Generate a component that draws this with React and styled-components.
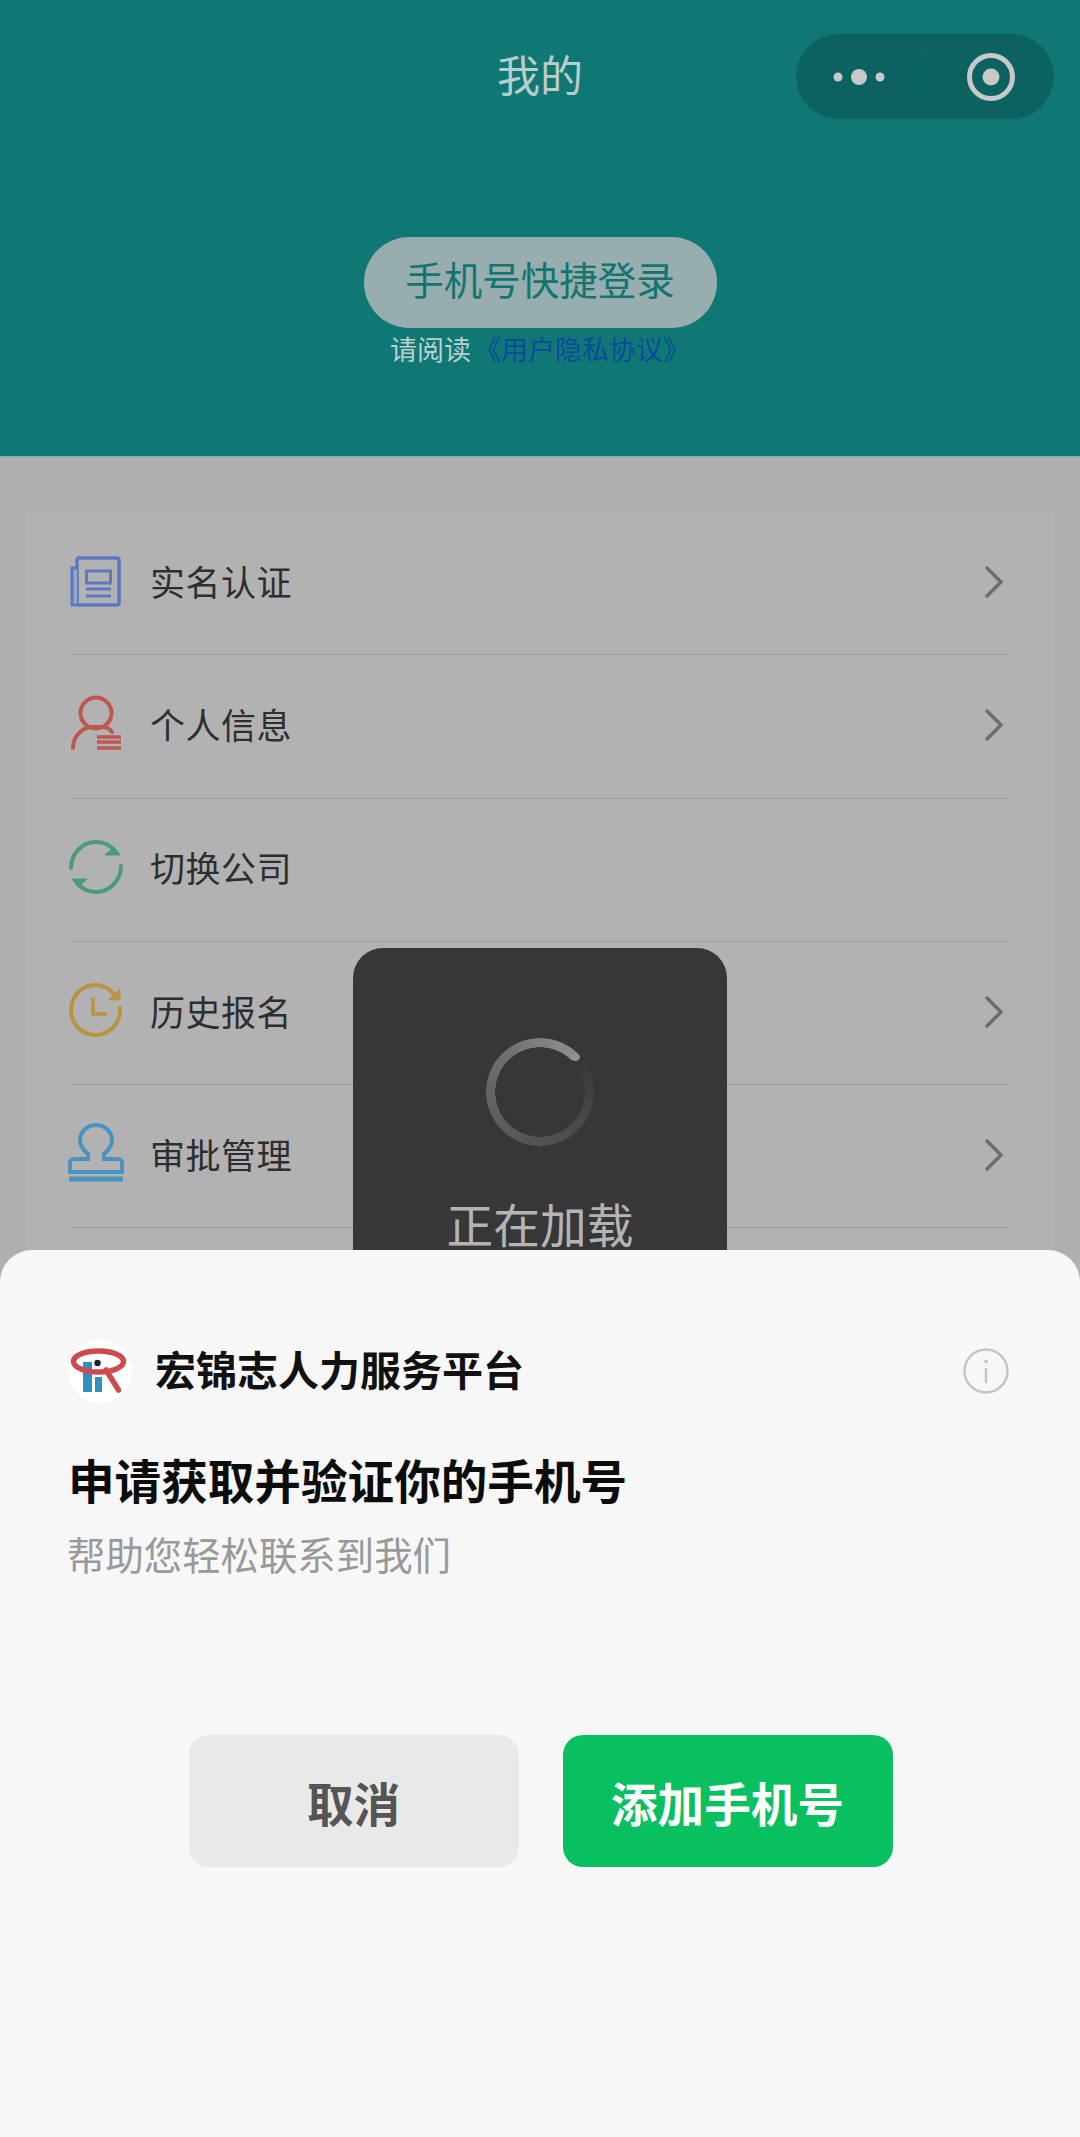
import React from "react";
import styled, { createGlobalStyle } from "styled-components";

const Global = createGlobalStyle`
  html, body { margin: 0; padding: 0; background: #b0b0b0; }
  body { font-family: "Noto Sans CJK SC", "Noto Sans", sans-serif; }
  * { box-sizing: border-box; }
`;

const Screen = styled.div`
  position: relative;
  width: 1080px;
  height: 2137px;
  overflow: hidden;
  background: #afafaf;
`;

const Header = styled.header`
  height: 458px;
  background: #0f7874;
  border-bottom: 2px solid #86b0ac;
  display: flex;
  flex-direction: column;
  align-items: center;
`;

const NavBar = styled.div`
  position: relative;
  align-self: stretch;
  height: 153px;
  padding-top: 32px;
  display: flex;
  justify-content: center;
`;

const NavTitle = styled.h1`
  margin: 0;
  height: 84px;
  line-height: 82px;
  font-size: 43px;
  font-weight: 400;
  color: #b9cdcb;
`;

const Capsule = styled.div`
  position: absolute;
  top: 34px;
  right: 26px;
  width: 258px;
  height: 85px;
  border-radius: 43px;
  background: #0b6261;
  display: flex;
  align-items: center;
`;

const CapsuleCell = styled.div`
  flex: 1;
  height: 100%;
  padding-left: ${(p) => p.$inset || 0}px;
  display: flex;
  align-items: center;
  justify-content: center;
`;

const CapsuleRule = styled.div`
  width: 1px;
  height: 52px;
  background: #0f6f6d;
`;

const LoginButton = styled.div`
  margin-top: 84px;
  width: 353px;
  height: 91px;
  border-radius: 46px;
  background: #97adae;
  color: #127570;
  font-size: 38.5px;
  line-height: 82px;
  text-align: center;
`;

const Agreement = styled.p`
  margin: 1px 0 0;
  height: 40px;
  line-height: 40px;
  font-size: 27px;
  color: #bccfce;
`;

const AgreementLink = styled.span`
  margin-left: 3px;
  color: #0d4a9c;
`;

const MenuCard = styled.section`
  margin: 54px 27px 0;
  padding: 0 43px;
  height: 900px;
  background: #b2b2b2;
`;

const MenuRow = styled.div`
  height: 143.3px;
  display: flex;
  align-items: center;
  padding-bottom: 6px;
  border-bottom: 1px solid #a0a0a0;
  font-size: 35px;
  color: #2e2e2e;
`;

const MenuIcon = styled.div`
  width: 56px;
  height: 60px;
  margin-left: -2px;
  margin-right: 26px;
  display: flex;
  align-items: center;
  justify-content: center;
`;

const MenuLabel = styled.span`
  flex: 1;
  letter-spacing: 0.5px;
`;

const Chevron = styled.div`
  margin: 3px 6px 0 0;
  display: flex;
`;

const Toast = styled.div`
  position: absolute;
  left: 353px;
  top: 948px;
  width: 374px;
  height: 374px;
  border-radius: 30px;
  background: #373737;
  display: flex;
  flex-direction: column;
  align-items: center;
  padding-top: 90px;
`;

const Spinner = styled.div`
  position: relative;
  width: 108px;
  height: 108px;
  border-radius: 50%;
  background: conic-gradient(from 45deg, #373737 0deg, #484848 80deg, #5c5c5c 180deg, #6e6e6e 270deg, #909090 360deg);
  -webkit-mask: radial-gradient(circle, transparent 44.5px, #000 45px);
  mask: radial-gradient(circle, transparent 44.5px, #000 45px);

  &::after {
    content: "";
    position: absolute;
    left: 85px;
    top: 14px;
    width: 9px;
    height: 9px;
    border-radius: 50%;
    background: #909090;
  }
`;

const ToastText = styled.div`
  margin-top: 47px;
  font-size: 46.7px;
  line-height: 60px;
  color: #b4b4b4;
`;

const Sheet = styled.section`
  position: absolute;
  left: 0;
  right: 0;
  top: 1250px;
  bottom: 0;
  background: #f7f7f7;
  border-radius: 32px 32px 0 0;
  padding: 86px 68px 0;
`;

const AppRow = styled.div`
  height: 70px;
  display: flex;
  align-items: center;
`;

const AppLogo = styled.div`
  width: 64px;
  height: 64px;
  margin-right: 23px;
  border-radius: 50%;
  background: #fff;
  display: flex;
`;

const AppName = styled.span`
  flex: 1;
  padding-bottom: 6px;
  font-size: 41px;
  font-weight: 700;
  color: #111;
`;

const InfoIcon = styled.div`
  display: flex;
  margin-right: 3px;
`;

const SheetTitle = styled.h2`
  margin: 40px 0 0;
  height: 66px;
  line-height: 66px;
  font-size: 46.6px;
  font-weight: 700;
  color: #0c0c0c;
`;

const SheetHint = styled.p`
  margin: 13px 0 0 -1px;
  height: 56px;
  line-height: 56px;
  font-size: 38.4px;
  color: #999;
`;

const Actions = styled.div`
  margin-top: 154px;
  padding-left: 1px;
  display: flex;
  justify-content: center;
  gap: 44px;
`;

const ActionButton = styled.button`
  width: 330px;
  height: 132px;
  border: 0;
  border-radius: 20px;
  font-family: inherit;
  font-size: 46.6px;
  font-weight: 700;
  color: ${(p) => (p.$primary ? "#fff" : "#555")};
  background: ${(p) => (p.$primary ? "#08c05f" : "#e9e9e9")};
`;

const NewsIcon = () => (
  <svg width="52" height="54" viewBox="0 -3 52 54" fill="none" stroke="#5c78bf" strokeWidth="3.5">
    <rect x="7" y="2" width="42" height="47" rx="2" />
    <path d="M7 12H2v37h5" strokeWidth="3" fill="#93a6d2" />
    <rect x="16.5" y="15" width="24" height="12" strokeWidth="3" />
    <path d="M16 33h25M16 40h25" strokeWidth="3" />
  </svg>
);

const PersonIcon = () => (
  <svg width="54" height="56" viewBox="0 0 54 56" fill="none" stroke="#bf5751" strokeWidth="4">
    <circle cx="27" cy="18" r="15.5" />
    <path d="M4 53c0-10 7-19 17-21h12c4 0 8 2 10 5" strokeLinecap="round" />
    <path d="M28 42h24M28 47h24M28 53h24" strokeWidth="3.5" />
  </svg>
);

const SwitchIcon = () => (
  <svg width="56" height="56" viewBox="0 0 56 56" fill="none" stroke="#4a9c76" strokeWidth="4">
    <path d="M3 29C3 15 14 3 28 3c8 0 14 3 19 9" strokeLinecap="round" />
    <path d="M53 27c0 14-11 26-25 26-8 0-14-3-19-9" strokeLinecap="round" />
    <path d="M37 16h15l-6-8z" fill="#4a9c76" strokeWidth="1" />
    <path d="M19 40H4l6 8z" fill="#4a9c76" strokeWidth="1" />
  </svg>
);

const HistoryIcon = () => (
  <svg width="56" height="56" viewBox="0 0 56 56" fill="none" stroke="#b9933f" strokeWidth="4">
    <path d="M52 26v2c0 14-11 25-24.500 25S3 42 3 28 14 3 27.500 3c7 0 13 3 17 8" strokeLinecap="round" />
    <path d="M25 16v16h14" strokeWidth="3.5" />
    <path d="M40 18h12V7z" fill="#b9933f" strokeWidth="1" />
  </svg>
);

const StampIcon = () => (
  <svg width="56" height="60" viewBox="0 0 56 60" fill="none" stroke="#4a93c0" strokeWidth="4">
    <path d="M20 36v-5c-5-4-8-9-8-14C12 9 19 2 28 2s16 7 16 15c0 5-3 10-8 14v5h14c2.500 0 4 2 4 4v9H2v-9c0-2 1.500-4 4-4z" />
    <path d="M1 56h54" strokeWidth="5" />
  </svg>
);

const MoreDots = () => (
  <svg width="54" height="18" viewBox="0 0 54 18" fill="#c8c8c8">
    <circle cx="6" cy="9" r="4.500" />
    <circle cx="27" cy="9" r="8" />
    <circle cx="48" cy="9" r="4.500" />
  </svg>
);

const TargetIcon = () => (
  <svg width="50" height="50" viewBox="0 0 50 50">
    <circle cx="25" cy="25" r="21.500" fill="none" stroke="#c8c8c8" strokeWidth="5" />
    <circle cx="25" cy="25" r="8.500" fill="#c8c8c8" />
  </svg>
);

const ChevronIcon = () => (
  <svg width="20" height="34" viewBox="0 0 20 34" fill="none" stroke="#6c6c6c" strokeWidth="3.500" strokeLinecap="round">
    <path d="M3 3l14 14L3 31" />
  </svg>
);

const BrandMark = () => (
  <svg width="64" height="64" viewBox="0 0 64 64" fill="none">
    <rect x="15" y="23" width="9" height="30" fill="#2f8fc4" />
    <rect x="27" y="38" width="7" height="15" fill="#2f8fc4" />
    <circle cx="29.500" cy="24" r="3.200" fill="#222" />
    <ellipse cx="30.500" cy="22.500" rx="25" ry="10.500" stroke="#cf4a4c" strokeWidth="5.500" />
    <path d="M38 31l12.500 20" stroke="#cf4a4c" strokeWidth="5.500" strokeLinecap="round" />
  </svg>
);

const InfoGlyph = () => (
  <svg width="46" height="46" viewBox="0 0 46 46" fill="none" stroke="#c4c4c4">
    <circle cx="23" cy="23" r="21.500" strokeWidth="2.400" />
    <path d="M23 20v15" strokeWidth="2.400" />
    <circle cx="23" cy="13.500" r="1.800" fill="#c4c4c4" stroke="none" />
  </svg>
);

const menu = [
  { label: "实名认证", Icon: NewsIcon, arrow: true },
  { label: "个人信息", Icon: PersonIcon, arrow: true },
  { label: "切换公司", Icon: SwitchIcon, arrow: false },
  { label: "历史报名", Icon: HistoryIcon, arrow: true },
  { label: "审批管理", Icon: StampIcon, arrow: true },
];

export default function App() {
  return (
    <Screen>
      <Global />
      <Header>
        <NavBar>
          <NavTitle>我的</NavTitle>
          <Capsule>
            <CapsuleCell><MoreDots /></CapsuleCell>
            <CapsuleRule />
            <CapsuleCell $inset={6}><TargetIcon /></CapsuleCell>
          </Capsule>
        </NavBar>
        <LoginButton>手机号快捷登录</LoginButton>
        <Agreement>
          请阅读<AgreementLink>《用户隐私协议》</AgreementLink>
        </Agreement>
      </Header>

      <MenuCard>
        {menu.map(({ label, Icon, arrow }) => (
          <MenuRow key={label}>
            <MenuIcon><Icon /></MenuIcon>
            <MenuLabel>{label}</MenuLabel>
            {arrow && <Chevron><ChevronIcon /></Chevron>}
          </MenuRow>
        ))}
      </MenuCard>

      <Toast>
        <Spinner />
        <ToastText>正在加载</ToastText>
      </Toast>

      <Sheet>
        <AppRow>
          <AppLogo><BrandMark /></AppLogo>
          <AppName>宏锦志人力服务平台</AppName>
          <InfoIcon><InfoGlyph /></InfoIcon>
        </AppRow>
        <SheetTitle>申请获取并验证你的手机号</SheetTitle>
        <SheetHint>帮助您轻松联系到我们</SheetHint>
        <Actions>
          <ActionButton>取消</ActionButton>
          <ActionButton $primary>添加手机号</ActionButton>
        </Actions>
      </Sheet>
    </Screen>
  );
}
